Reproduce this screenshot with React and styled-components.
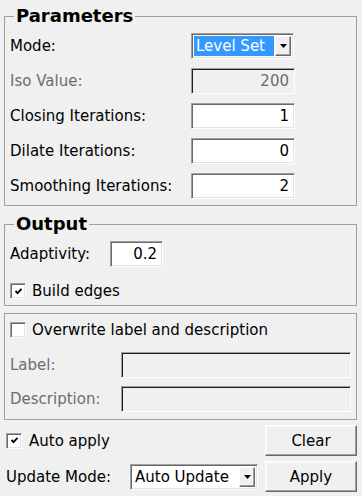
import React from "react";
import styled, { createGlobalStyle } from "styled-components";

const GlobalStyle = createGlobalStyle`
  html, body {
    margin: 0;
    padding: 0;
    background: #f0f0f0;
  }
  body {
    font-family: "DejaVu Sans", Verdana, sans-serif;
    font-size: 15px;
    color: #000;
  }
  * { box-sizing: border-box; }
`;

const Panel = styled.div`
  width: 357px;
  padding: 5px 0 0 4px;
  display: flex;
  flex-direction: column;
`;

const GroupBox = styled.fieldset`
  margin: ${(p) => p.$mt || 0}px 0 0 0;
  border: 1px solid #a0a0a0;
  padding: ${(p) => p.$pt || 0}px 4px ${(p) => p.$pb || 0}px 5px;
  min-width: 0;
`;

const Legend = styled.legend`
  font-family: "DejaVu Sans", Verdana, sans-serif;
  font-weight: bold;
  font-size: 18px;
  line-height: 22px;
  padding: 0 2px;
  margin-left: 4px;
`;

const FormGrid = styled.div`
  display: grid;
  grid-template-columns: ${(p) => p.$label}px ${(p) => p.$field}px;
  grid-auto-rows: 26px;
  row-gap: ${(p) => p.$gap || 0}px;
  margin-top: ${(p) => p.$mt || 0}px;
  align-items: center;
`;

const Label = styled.span`
  white-space: nowrap;
  color: ${(p) => (p.$disabled ? "#6d6d6d" : "#000")};
`;

const Field = styled.div`
  height: 26px;
  width: ${(p) => (p.$width ? `${p.$width}px` : "100%")};
  border: 1px solid;
  border-color: #a0a0a0 #ffffff #ffffff #a0a0a0;
  box-shadow: inset 1px 1px 0 ${(p) => (p.$disabled ? "#1e1e1e" : "#696969")},
    inset -1px -1px 0 ${(p) => (p.$disabled ? "#f0f0f0" : "#e3e3e3")};
  background: ${(p) => (p.$disabled ? "#f0f0f0" : "#ffffff")};
  color: ${(p) => (p.$disabled ? "#6d6d6d" : "#000")};
  display: flex;
  align-items: center;
  justify-content: flex-end;
  padding: 0 5px 0 4px;
  white-space: nowrap;
`;

const Combo = styled.div`
  height: 26px;
  width: ${(p) => p.$width}px;
  border: 1px solid;
  border-color: #a0a0a0 #ffffff #ffffff #a0a0a0;
  box-shadow: inset 1px 1px 0 #696969, inset -1px -1px 0 #e3e3e3;
  background: #ffffff;
  display: flex;
  align-items: stretch;
  padding: 2px;
`;

const ComboText = styled.div`
  flex: 1;
  display: flex;
  align-items: center;
  padding-left: 2px;
  margin-right: 1px;
  white-space: nowrap;
  overflow: hidden;
  background: ${(p) => (p.$selected ? "#3399ff" : "transparent")};
  color: ${(p) => (p.$selected ? "#ffffff" : "#000")};
`;

const DropButton = styled.div`
  width: 16px;
  background: #f0f0f0;
  border: 1px solid;
  border-color: #ffffff #696969 #696969 #ffffff;
  box-shadow: inset -1px -1px 0 #a0a0a0;
  display: flex;
  align-items: center;
  justify-content: center;
`;

const Arrow = () => (
  <svg width="7" height="4" viewBox="0 0 7 4">
    <polygon points="0,0 7,0 3.5,4" fill="#000" />
  </svg>
);

const CheckRow = styled.label`
  display: flex;
  align-items: center;
  gap: ${(p) => p.$gap || 6}px;
  height: 20px;
  margin-top: ${(p) => p.$mt || 0}px;
  white-space: nowrap;
`;

const CheckBox = styled.span`
  width: 16px;
  height: 16px;
  flex: none;
  background: #ffffff;
  border: 1px solid;
  border-color: #a0a0a0 #ffffff #ffffff #a0a0a0;
  box-shadow: inset 1px 1px 0 #696969, inset -1px -1px 0 #e3e3e3;
  display: flex;
  align-items: center;
  justify-content: center;
`;

const Check = () => (
  <svg width="9" height="9" viewBox="0 0 9 9">
    <polyline points="1.5,4 3.5,6.2 7.5,1.8" fill="none" stroke="#000" strokeWidth="1.9" />
  </svg>
);

const BottomGrid = styled.div`
  display: grid;
  grid-template-columns: 1fr 92px;
  grid-template-rows: 31px 31px;
  row-gap: 5px;
  margin-top: 5px;
  width: 353px;
`;

const LeftCell = styled.div`
  display: flex;
  align-items: center;
  padding-left: 2px;
`;

const UpdateLabel = styled.span`
  width: 124px;
  white-space: nowrap;
`;

const Button = styled.button`
  font-family: "DejaVu Sans", Verdana, sans-serif;
  font-size: 15px;
  color: #000;
  background: #f0f0f0;
  border: 1px solid;
  border-color: #ffffff #696969 #696969 #ffffff;
  box-shadow: inset -1px -1px 0 #a0a0a0, inset 1px 1px 0 #f8f8f8;
  padding: 0;
  margin: 0;
  height: 31px;
  width: 92px;
`;

export default function App() {
  return (
    <>
      <GlobalStyle />
      <Panel>
        <GroupBox $pt={6} $pb={6}>
          <Legend>Parameters</Legend>
          <FormGrid $label={181} $field={104} $gap={9}>
            <Label>Mode:</Label>
            <Combo $width={103}>
              <ComboText $selected>Level Set</ComboText>
              <DropButton>
                <Arrow />
              </DropButton>
            </Combo>
            <Label $disabled>Iso Value:</Label>
            <Field $disabled>200</Field>
            <Label>Closing Iterations:</Label>
            <Field>1</Field>
            <Label>Dilate Iterations:</Label>
            <Field>0</Field>
            <Label>Smoothing Iterations:</Label>
            <Field>2</Field>
          </FormGrid>
        </GroupBox>

        <GroupBox $mt={7} $pt={6} $pb={4}>
          <Legend>Output</Legend>
          <FormGrid $label={100} $field={53}>
            <Label>Adaptivity:</Label>
            <Field>0.2</Field>
          </FormGrid>
          <CheckRow $mt={14}>
            <CheckBox>
              <Check />
            </CheckBox>
            <span>Build edges</span>
          </CheckRow>
        </GroupBox>

        <GroupBox $mt={7} $pt={6} $pb={7}>
          <CheckRow>
            <CheckBox />
            <span>Overwrite label and description</span>
          </CheckRow>
          <FormGrid $label={111} $field={230} $gap={8} $mt={12}>
            <Label $disabled>Label:</Label>
            <Field $disabled />
            <Label $disabled>Description:</Label>
            <Field $disabled />
          </FormGrid>
        </GroupBox>

        <BottomGrid>
          <LeftCell>
            <CheckRow $gap={7}>
              <CheckBox>
                <Check />
              </CheckBox>
              <span>Auto apply</span>
            </CheckRow>
          </LeftCell>
          <Button>Clear</Button>
          <LeftCell>
            <UpdateLabel>Update Mode:</UpdateLabel>
            <Combo $width={128}>
              <ComboText>Auto Update</ComboText>
              <DropButton>
                <Arrow />
              </DropButton>
            </Combo>
          </LeftCell>
          <Button>Apply</Button>
        </BottomGrid>
      </Panel>
    </>
  );
}
